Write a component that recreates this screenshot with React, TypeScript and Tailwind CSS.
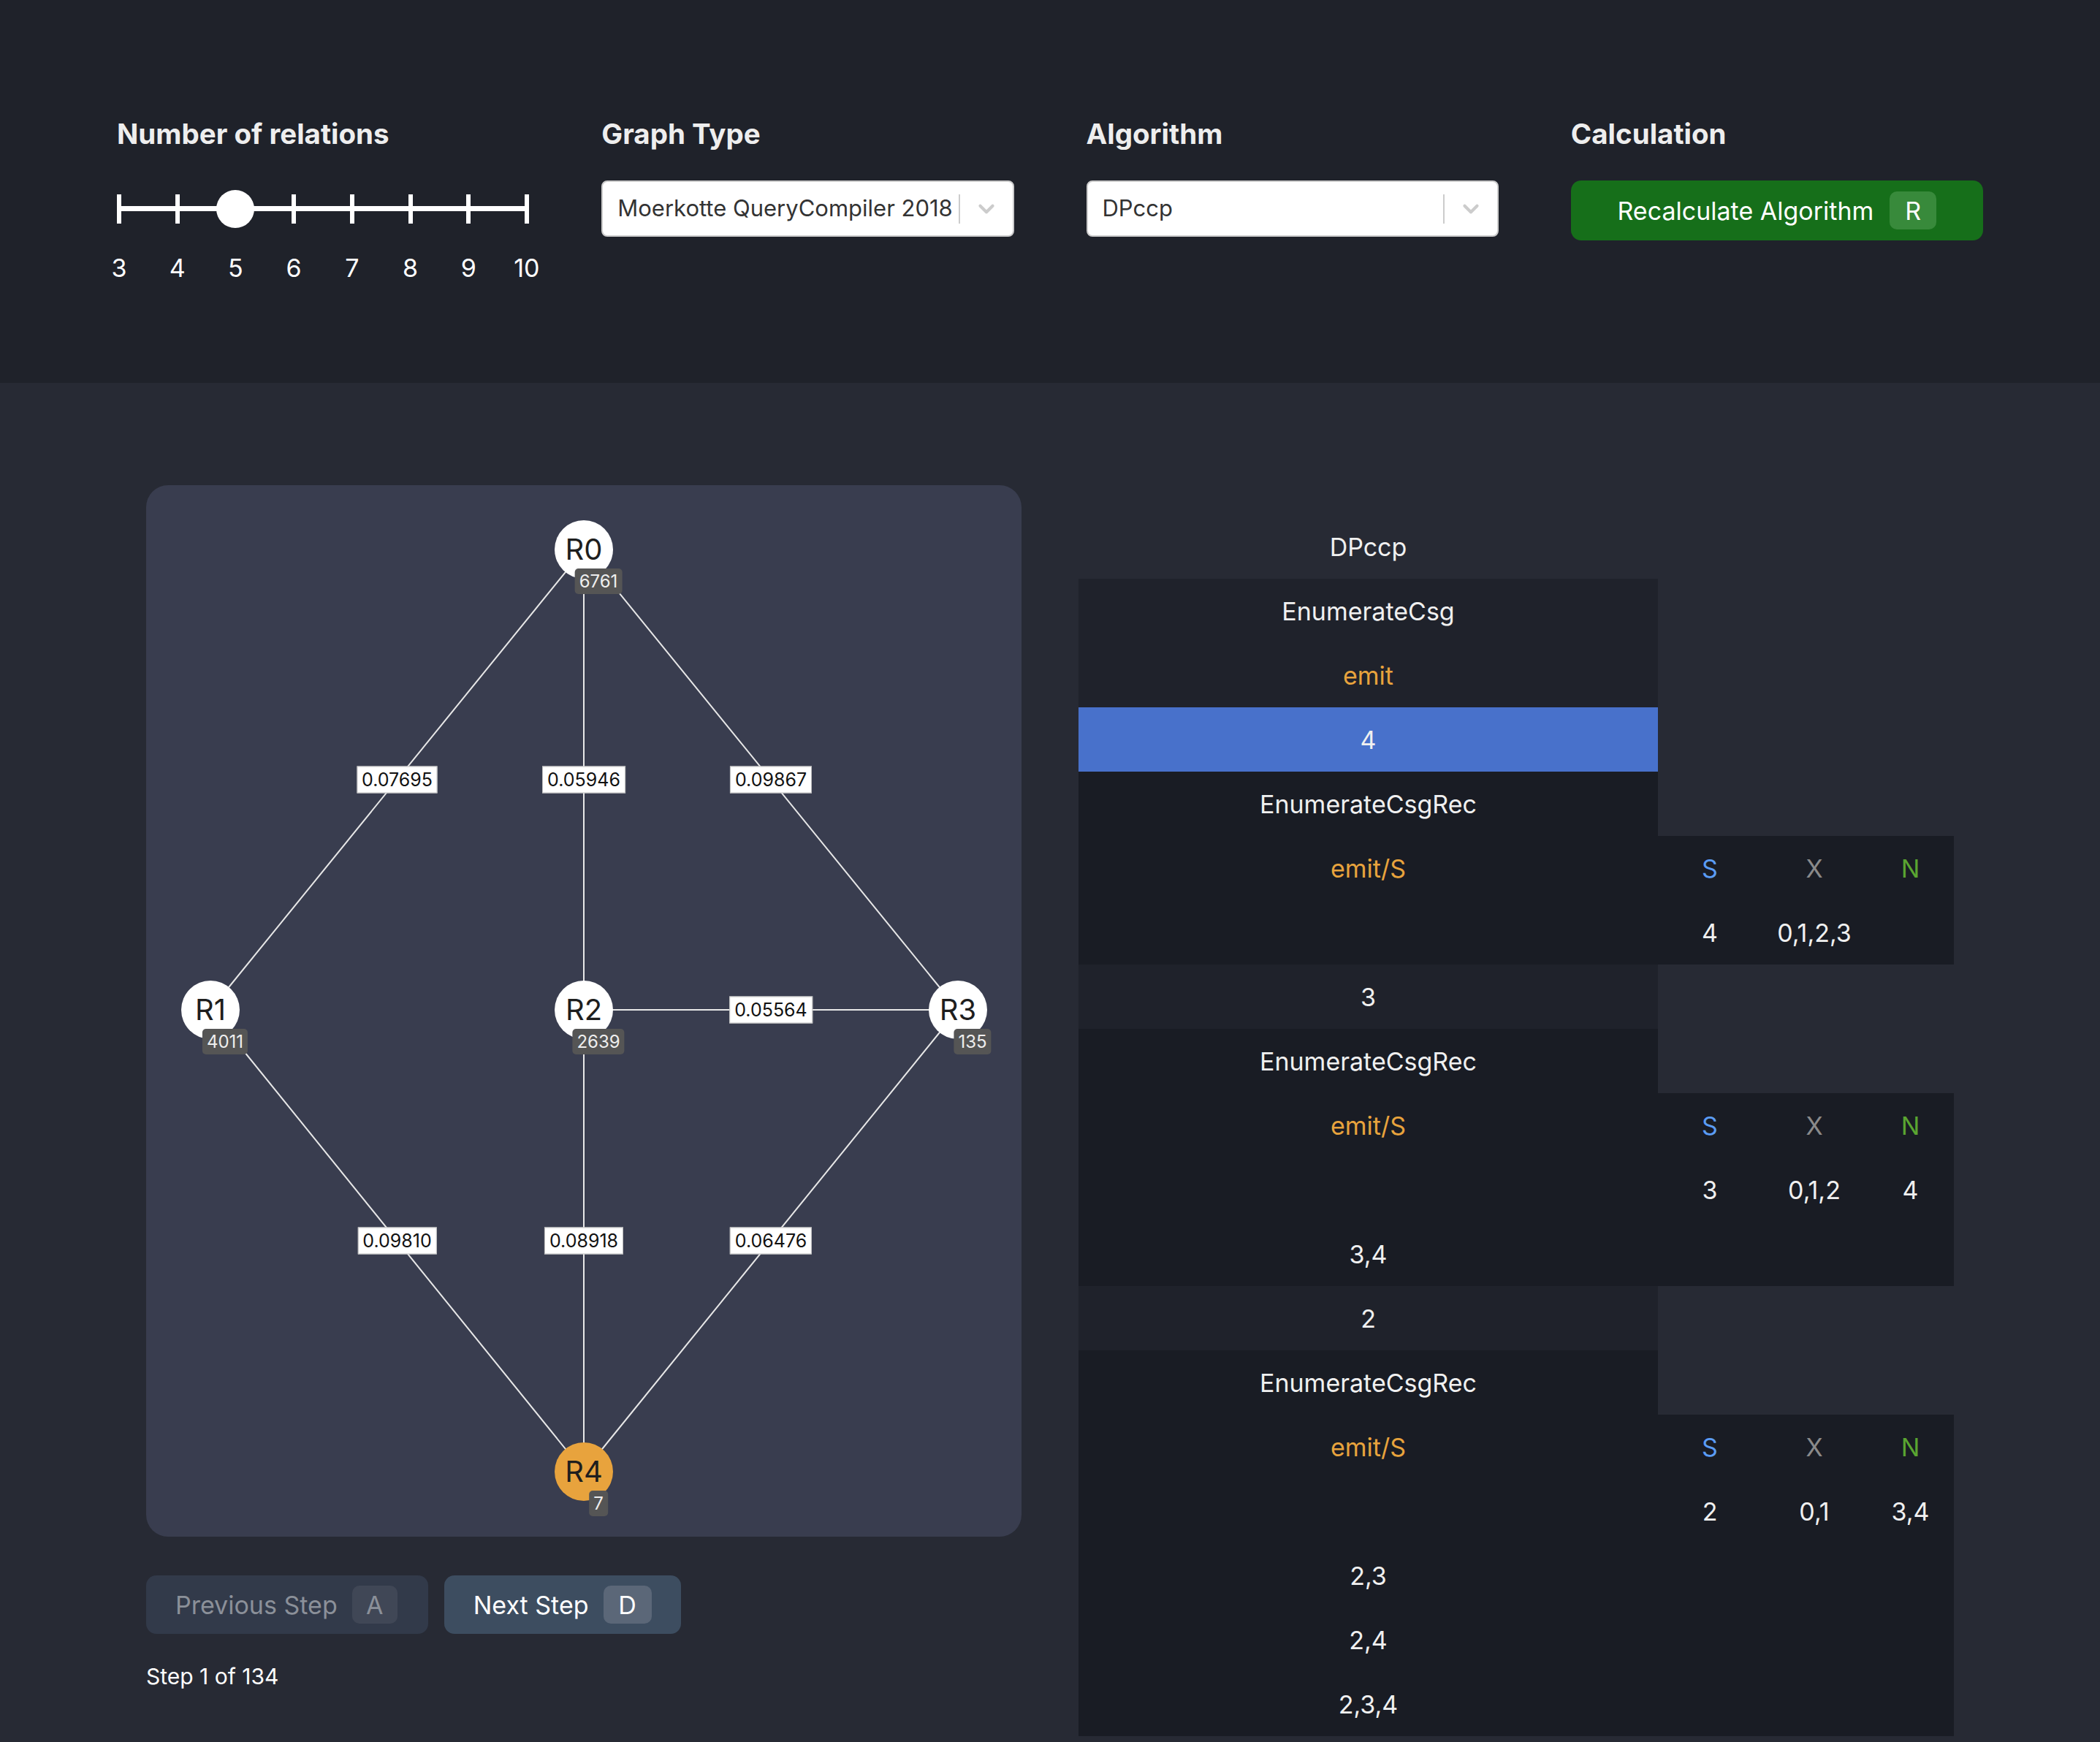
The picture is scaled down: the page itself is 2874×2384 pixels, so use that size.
import { ChevronDown } from 'lucide-react';

const nodes = [
  { id: 'R0', x: 599, y: 88, card: '6761', active: false },
  { id: 'R1', x: 88, y: 718, card: '4011', active: false },
  { id: 'R2', x: 599, y: 718, card: '2639', active: false },
  { id: 'R3', x: 1111, y: 718, card: '135', active: false },
  { id: 'R4', x: 599, y: 1350, card: '7', active: true },
];

const edges = [
  { a: 0, b: 1, w: '0.07695' },
  { a: 0, b: 2, w: '0.05946' },
  { a: 0, b: 3, w: '0.09867' },
  { a: 1, b: 4, w: '0.09810' },
  { a: 2, b: 4, w: '0.08918' },
  { a: 3, b: 4, w: '0.06476' },
  { a: 2, b: 3, w: '0.05564' },
];

function Select({ value }: { value: string }) {
  return (
    <div className="flex h-[77px] items-center rounded-[8px] border-2 border-[#cccccc] bg-white pl-[20px]">
      <span className="flex-1 truncate text-[31px] text-[#333333]">{value}</span>
      <div className="h-[40px] w-[2px] bg-[#cccccc]" />
      <div className="flex w-[72px] justify-center">
        <ChevronDown size={34} strokeWidth={3} className="text-[#cccccc]" />
      </div>
    </div>
  );
}

function Slider() {
  const ticks = [3, 4, 5, 6, 7, 8, 9, 10];
  return (
    <div className="relative w-[564px]">
      <div className="absolute left-0 right-0 top-[35px] h-[7px] bg-white" />
      <div className="absolute left-[136px] top-[13px] h-[52px] w-[52px] rounded-full bg-white" />
      <div className="flex justify-between pt-[19px]">
        {ticks.map((t) => (
          <div key={t} className="flex w-[6px] flex-col items-center">
            <div className="h-[40px] w-[6px] bg-white" />
            <div className="mt-[39px] text-[34px] leading-[44px] text-white">{t}</div>
          </div>
        ))}
      </div>
    </div>
  );
}

function Row({ children, className = '' }: { children?: React.ReactNode; className?: string }) {
  return (
    <div className={`flex h-[88px] items-center justify-center text-[34px] ${className}`}>{children}</div>
  );
}

function RecBlock({ s, x, n, subsets }: { s: string; x: string; n: string; subsets: string[] }) {
  return (
    <div>
      <div className="w-[793px] bg-[#191c24]">
        <Row>EnumerateCsgRec</Row>
      </div>
      <div className="flex bg-[#191c24]">
        <div className="w-[793px]">
          <Row className="text-[#e8a33d]">emit/S</Row>
          <Row />
          {subsets.map((sub) => (
            <Row key={sub}>{sub}</Row>
          ))}
        </div>
        <div className="w-[405px]">
          <div className="grid h-[88px] grid-cols-[142px_144px_119px] items-center text-center text-[34px]">
            <span className="text-[#5b9cf5]">S</span>
            <span className="text-[#8a8a8a]">X</span>
            <span className="text-[#5aa531]">N</span>
          </div>
          <div className="grid h-[88px] grid-cols-[142px_144px_119px] items-center text-center text-[34px]">
            <span>{s}</span>
            <span>{x}</span>
            <span>{n}</span>
          </div>
        </div>
      </div>
    </div>
  );
}

export default function App() {
  return (
    <div className="min-h-[2384px] bg-[#272a34] text-[#f0f0f0]" style={{ fontFamily: 'Inter, "Noto Sans", sans-serif' }}>
      {/* Header controls */}
      <header className="h-[524px] bg-[#1f222a] px-[160px] pt-[159px]">
        <div className="grid grid-cols-4 gap-x-[99px]">
          <div>
            <h2 className="text-[38.5px] font-bold leading-[48px] text-[#eeeeee]">Number of relations</h2>
            <div className="mt-[40px]">
              <Slider />
            </div>
          </div>
          <div>
            <h2 className="text-[38.5px] font-bold leading-[48px] text-[#eeeeee]">Graph Type</h2>
            <div className="mt-[40px]">
              <Select value="Moerkotte QueryCompiler 2018" />
            </div>
          </div>
          <div>
            <h2 className="text-[38.5px] font-bold leading-[48px] text-[#eeeeee]">Algorithm</h2>
            <div className="mt-[40px]">
              <Select value="DPccp" />
            </div>
          </div>
          <div>
            <h2 className="text-[38.5px] font-bold leading-[48px] text-[#eeeeee]">Calculation</h2>
            <button className="mt-[40px] flex h-[82px] w-full items-center justify-center gap-[22px] rounded-[14px] bg-[#166f1a] text-[34px] text-white">
              Recalculate Algorithm
              <span className="flex h-[52px] w-[64px] items-center justify-center rounded-[10px] bg-[#388a3b]">R</span>
            </button>
          </div>
        </div>
      </header>

      {/* Main */}
      <main className="grid grid-cols-2 gap-x-[78px] px-[200px] pt-[140px]">
        <div>
          <div className="relative h-[1439px] rounded-[30px] bg-[#393d4f]">
            <svg className="absolute inset-0 h-full w-full">
              {edges.map((e, i) => (
                <line
                  key={i}
                  x1={nodes[e.a].x}
                  y1={nodes[e.a].y}
                  x2={nodes[e.b].x}
                  y2={nodes[e.b].y}
                  stroke="#e8e8e8"
                  strokeWidth={2}
                />
              ))}
            </svg>
            {edges.map((e, i) => {
              const mx = (nodes[e.a].x + nodes[e.b].x) / 2;
              const my = (nodes[e.a].y + nodes[e.b].y) / 2;
              return (
                <div
                  key={i}
                  className="absolute flex h-[37px] -translate-x-1/2 -translate-y-1/2 items-center border border-[#bbbbbb] bg-white px-[6px] text-[25px] text-[#111111]"
                  style={{ left: mx, top: my }}
                >
                  {e.w}
                </div>
              );
            })}
            {nodes.map((n) => (
              <div key={n.id}>
                <div
                  className={`absolute flex h-[80px] w-[80px] items-center justify-center rounded-full text-[40px] text-[#1e1e1e] ${n.active ? 'bg-[#e8a33d]' : 'bg-white'}`}
                  style={{ left: n.x - 40, top: n.y - 40 }}
                >
                  {n.id}
                </div>
                <div
                  className="absolute flex h-[35px] -translate-x-1/2 items-center rounded-[5px] bg-[#555555] px-[6px] text-[24px] text-[#eeeeee]"
                  style={{ left: n.x + 20, top: n.y + 26 }}
                >
                  {n.card}
                </div>
              </div>
            ))}
          </div>

          <div className="mt-[53px] flex gap-[22px]">
            <button className="flex h-[80px] items-center gap-[20px] rounded-[14px] bg-[#323a4a] pl-[40px] pr-[42px] text-[34px] text-[#8b9099]">
              Previous Step
              <span className="flex h-[52px] w-[62px] items-center justify-center rounded-[10px] bg-[#404756]">A</span>
            </button>
            <button className="flex h-[80px] items-center gap-[20px] rounded-[14px] bg-[#3d4d60] pl-[40px] pr-[40px] text-[34px] text-white">
              Next Step
              <span className="flex h-[52px] w-[66px] items-center justify-center rounded-[10px] bg-[#5b6778]">D</span>
            </button>
          </div>
          <p className="mt-[38px] text-[30px] leading-[40px] text-white">Step 1 of 134</p>
        </div>

        {/* Algorithm trace */}
        <div className="pt-[40px]">
          <div className="w-[793px]">
            <Row>DPccp</Row>
          </div>
          <div className="w-[793px] bg-[#1f222b]">
            <Row>EnumerateCsg</Row>
            <Row className="text-[#e8a33d]">emit</Row>
            <Row className="bg-[#4871cb]">4</Row>
          </div>
          <RecBlock s="4" x="0,1,2,3" n="" subsets={[]} />
          <div className="w-[793px] bg-[#1f222b]">
            <Row>3</Row>
          </div>
          <RecBlock s="3" x="0,1,2" n="4" subsets={['3,4']} />
          <div className="w-[793px] bg-[#1f222b]">
            <Row>2</Row>
          </div>
          <RecBlock s="2" x="0,1" n="3,4" subsets={['2,3', '2,4', '2,3,4']} />
        </div>
      </main>
    </div>
  );
}
